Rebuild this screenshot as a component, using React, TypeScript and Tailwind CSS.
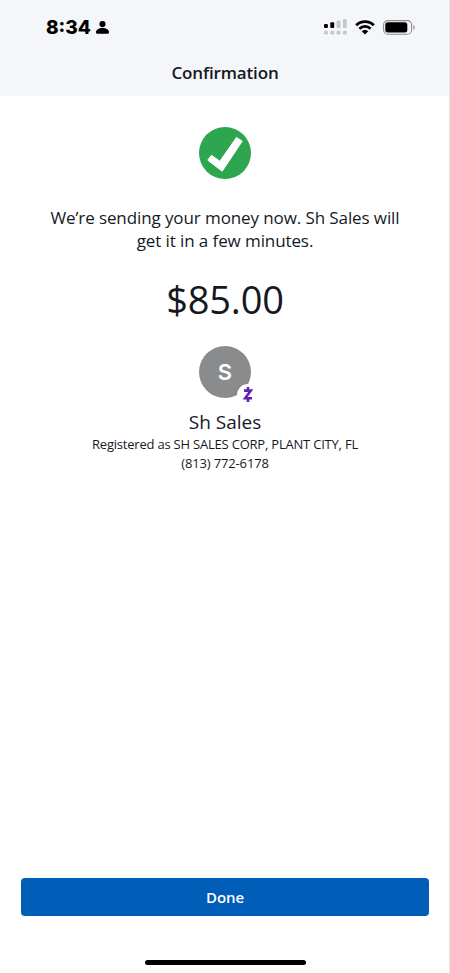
const SIGNAL_BARS = [
  { x: 0, height: 4, active: true },
  { x: 6.3, height: 5.8, active: true },
  { x: 12.6, height: 7.5, active: false },
  { x: 18.9, height: 9, active: false },
];

function SignalIcon() {
  return (
    <svg width="23" height="16" viewBox="0 0 23 16" aria-hidden>
      {SIGNAL_BARS.map((bar) => (
        <g key={bar.x}>
          <rect
            x={bar.x}
            y={9 - bar.height}
            width="3.9"
            height={bar.height}
            rx="1.1"
            fill={bar.active ? '#000' : '#c6c7c9'}
          />
          <rect x={bar.x} y="11.8" width="3.9" height="3.7" rx="1.2" fill="#c6c7c9" />
        </g>
      ))}
    </svg>
  );
}

function WifiIcon() {
  return (
    <svg width="20" height="15" viewBox="0 0 20 15" aria-hidden>
      <path d="M1.2 5.3a12.6 12.6 0 0 1 17.6 0" fill="none" stroke="#000" strokeWidth="2.8" />
      <path d="M4.4 8.7a8 8 0 0 1 11.2 0" fill="none" stroke="#000" strokeWidth="2.6" />
      <path d="M10 14.5 6.7 11.3a4.8 4.8 0 0 1 6.6 0z" fill="#000" />
    </svg>
  );
}

function BatteryIcon() {
  return (
    <svg width="33" height="15" viewBox="0 0 33 15" aria-hidden>
      <rect x="0.6" y="0.6" width="28" height="13.6" rx="4.2" fill="none" stroke="#8d8e90" strokeWidth="1.1" />
      <rect x="2.3" y="2.3" width="22" height="10.2" rx="2.5" fill="#000" />
      <path d="M30.4 5v4.8c1.8-.8 1.8-4 0-4.8z" fill="#8d8e90" />
    </svg>
  );
}

function PersonIcon() {
  return (
    <svg width="13" height="13" viewBox="0 0 13 13" aria-hidden>
      <circle cx="6.5" cy="3.1" r="3.1" />
      <path d="M0 11.2c0-2.5 2.8-4.2 6.5-4.2s6.5 1.7 6.5 4.2c0 1-.6 1.6-1.6 1.6H1.6c-1 0-1.6-.6-1.6-1.6z" />
    </svg>
  );
}

function SuccessIcon() {
  return (
    <svg className="size-[52px]" viewBox="0 0 52 52" aria-hidden>
      <circle cx="26" cy="26" r="26" fill="#2ea64f" />
      <path
        d="M8.8 33.2 12.4 28.3 20.9 34.2 37.5 10.4 43.2 14.2 23.2 44.2z"
        fill="#fff"
        stroke="#fff"
        strokeWidth="1"
        strokeLinejoin="round"
      />
    </svg>
  );
}

function StatusBar() {
  return (
    <div className="flex h-[54px] items-center justify-between pr-[34px] pl-[46px]">
      <div className="flex items-center gap-[5px]">
        <span className="font-['Inter',sans-serif] text-[19px] leading-none font-extrabold text-black">
          8:34
        </span>
        <PersonIcon />
      </div>
      <div className="flex items-center gap-2">
        <SignalIcon />
        <WifiIcon />
        <BatteryIcon />
      </div>
    </div>
  );
}

function RecipientAvatar() {
  return (
    <div className="relative flex size-[52px] items-center justify-center rounded-full bg-[#8a8b8c]">
      <span className="font-['Inter',sans-serif] text-[22px] leading-none font-semibold text-white">S</span>
      <div className="absolute -right-2 -bottom-2 flex size-[22px] items-center justify-center rounded-full bg-white">
        <svg width="10" height="15" viewBox="0 0 10 15" fill="none" stroke="#6420b8" strokeWidth="2.6" aria-hidden>
          <path d="M1 3.6h6.8L2.2 11.2H9" />
          <path d="M5 0v3.6M5 11.2V15" />
        </svg>
      </div>
    </div>
  );
}

export default function App() {
  return (
    <div className="relative flex h-[973px] w-[450px] flex-col overflow-hidden bg-white font-['Open_Sans',sans-serif] text-[#15191f]">
      <header className="h-24 shrink-0 bg-[#f4f6f9]">
        <StatusBar />
        <h1 className="mt-[7px] text-center text-[17px] leading-6 font-semibold tracking-[-0.15px]">Confirmation</h1>
      </header>

      <main className="flex flex-1 flex-col items-center pt-[31.4px] text-center">
        <SuccessIcon />
        <p className="mt-[26.6px] text-[17px] leading-[23px] tracking-[-0.1px]">
          We’re sending your money now. Sh Sales will
          <br />
          get it in a few minutes.
        </p>
        <p className="mt-[21px] text-[38px] leading-[52px] tracking-[-0.2px]">$85.00</p>
        <div className="mt-[21px]">
          <RecipientAvatar />
        </div>
        <h2 className="mt-[11px] text-[19px] leading-[26px]">Sh Sales</h2>
        <p className="text-[13px] leading-[19px] tracking-[-0.21px]">Registered as SH SALES CORP, PLANT CITY, FL</p>
        <p className="text-[13px] leading-[18px] tracking-[-0.15px]">(813) 772-6178</p>
      </main>

      <footer className="flex shrink-0 flex-col items-center pr-[21px] pb-2 pl-[21px]">
        <button className="h-[38px] w-full rounded bg-[#005eb8] text-[15px] font-semibold tracking-[-0.1px] text-white">
          Done
        </button>
        <div className="mt-[44px] h-[5px] w-[161px] rounded-full bg-black" />
      </footer>

      <div className="absolute inset-y-0 right-0 w-px bg-[#e3e4e6]" />
    </div>
  );
}
